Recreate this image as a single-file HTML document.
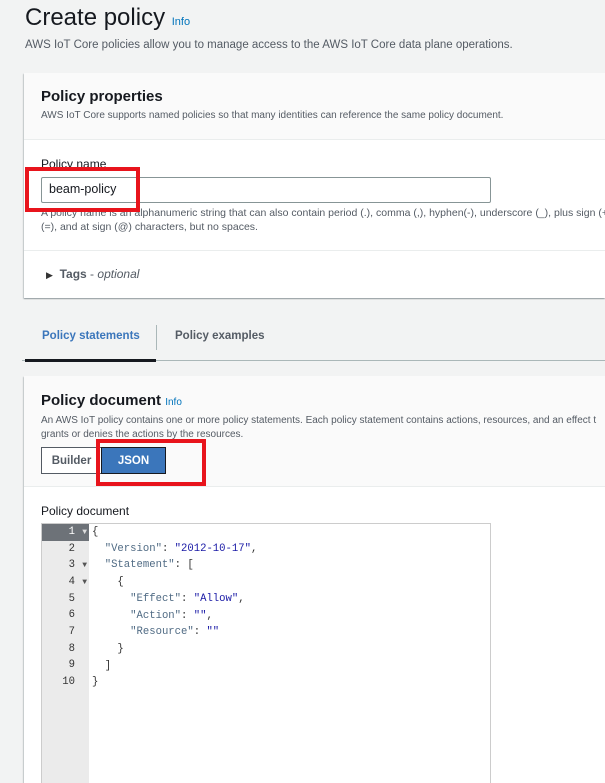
<!DOCTYPE html>
<html><head><style>
*{margin:0;padding:0;box-sizing:border-box}
html,body{width:605px;height:783px;overflow:hidden}
body{background:#f2f3f3;font-family:"Liberation Sans",sans-serif;color:#16191f;position:relative}
.a{position:absolute;white-space:nowrap}
.info{color:#0073bb;font-size:10px;font-weight:bold}
.card{position:absolute;left:24px;right:0;background:#fff;box-shadow:0 1px 1px rgba(0,28,36,.3),-1px 1px 1px rgba(0,28,36,.15)}
.red{position:absolute;border:4px solid #e8141c}
.code{font-family:"Liberation Mono",monospace;font-size:10.6px}
.ln{position:absolute;left:41px;width:48px;text-align:right;padding-right:14px;color:#333;font-family:"Liberation Mono",monospace;font-size:10.6px;height:17px;line-height:17px}
.k{color:#506b84}.v{color:#1a1aa6}
.tri{font-size:8px;color:#555;position:absolute;right:2px}
.clip{position:absolute;left:0;top:0;width:605px;height:783px;overflow:hidden}
</style></head><body><div class="clip">
<div class="a" style="left:25px;top:4px;font-size:24px;color:#16191f">Create policy <span class="info" style="font-weight:normal;font-size:11px">Info</span></div>
<div class="a" style="left:25px;top:39px;font-size:11.5px;color:#545b64">AWS IoT Core policies allow you to manage access to the AWS IoT Core data plane operations.</div>

<div class="card" style="top:73px;height:225px">
 <div style="background:#fafafa;height:67px;border-bottom:1px solid #eaeded"></div>
 <div style="position:absolute;top:177px;left:0;right:0;border-top:1px solid #eaeded"></div>
</div>
<div class="a" style="left:41px;top:88px;font-size:15px;font-weight:bold">Policy properties</div>
<div class="a" style="left:41px;top:110px;font-size:10px;color:#545b64">AWS IoT Core supports named policies so that many identities can reference the same policy document.</div>
<div class="a" style="left:41px;top:157px;font-size:12px">Policy name</div>
<div class="a" style="left:41px;top:177px;width:450px;height:26px;border:1px solid #879596;border-radius:2px;background:#fff"></div>
<div class="a" style="left:49px;top:182px;font-size:12.5px">beam-policy</div>
<div class="a" style="left:41px;top:206px;font-size:10.5px;color:#545b64;line-height:14px">A policy name is an alphanumeric string that can also contain period (.), comma (,), hyphen(-), underscore (_), plus sign (+), eq<br>(=), and at sign (@) characters, but no spaces.</div>
<div class="a" style="left:46px;top:267px;font-size:12px;color:#545b64"><span style="font-size:9px;color:#333">&#9654;</span>&nbsp; <b>Tags</b> - <i>optional</i></div>
<div class="red" style="left:25px;top:167px;width:115px;height:45px"></div>

<div class="a" style="left:42px;top:330px;font-size:11.5px;font-weight:bold;color:#3b76bb">Policy statements</div>
<div class="a" style="left:156px;top:325px;width:1px;height:25px;background:#aab7b8"></div>
<div class="a" style="left:175px;top:330px;font-size:11.5px;font-weight:bold;color:#545b64">Policy examples</div>
<div class="a" style="left:22px;top:360px;width:583px;height:1px;background:#aab7b8"></div>
<div class="a" style="left:25px;top:359px;width:131px;height:3px;background:#16191f"></div>

<div class="card" style="top:376px;height:420px">
 <div style="background:#fafafa;height:111px;border-bottom:1px solid #eaeded"></div>
</div>
<div class="a" style="left:41px;top:392px;font-size:15px;font-weight:bold">Policy document <span class="info" style="font-weight:normal">Info</span></div>
<div class="a" style="left:41px;top:414px;font-size:10px;color:#545b64;line-height:14px">An AWS IoT policy contains one or more policy statements. Each policy statement contains actions, resources, and an effect t<br>grants or denies the actions by the resources.</div>
<div class="a" style="left:41px;top:447px;width:61px;height:27px;border:1px solid #545b64;background:#fff;font-size:11.5px;font-weight:bold;color:#545b64;text-align:center;line-height:26px">Builder</div>
<div class="a" style="left:101px;top:447px;width:65px;height:27px;border:1px solid #16191f;background:#3b76bb;font-size:11.5px;font-weight:bold;color:#fff;text-align:center;line-height:26px">JSON</div>
<div class="red" style="left:96px;top:439px;width:110px;height:47px"></div>
<div class="a" style="left:41px;top:504px;font-size:12px">Policy document</div>

<div class="a" style="left:41px;top:523px;width:450px;height:270px;border:1px solid #ccc;background:#fff"></div>
<div class="a" style="left:42px;top:524px;width:47px;height:260px;background:#ebebeb"></div>
<div class="a" style="left:42px;top:524px;width:47px;height:17px;background:#6d7278"></div>
<div class="ln" style="top:524px;color:#fff">1<span class="tri" style="color:#ddd">&#9660;</span></div>
<div class="ln" style="top:541px">2</div>
<div class="ln" style="top:557px">3<span class="tri">&#9660;</span></div>
<div class="ln" style="top:574px">4<span class="tri">&#9660;</span></div>
<div class="ln" style="top:591px">5</div>
<div class="ln" style="top:607px">6</div>
<div class="ln" style="top:624px">7</div>
<div class="ln" style="top:641px">8</div>
<div class="ln" style="top:657px">9</div>
<div class="ln" style="top:674px">10</div>
<div class="a code" style="left:92px;top:524px;line-height:16.7px;white-space:pre;color:#333">{
  <span class="k">"Version"</span>: <span class="v">"2012-10-17"</span>,
  <span class="k">"Statement"</span>: [
    {
      <span class="k">"Effect"</span>: <span class="v">"Allow"</span>,
      <span class="k">"Action"</span>: <span class="v">""</span>,
      <span class="k">"Resource"</span>: <span class="v">""</span>
    }
  ]
}</div>
</div></body></html>
